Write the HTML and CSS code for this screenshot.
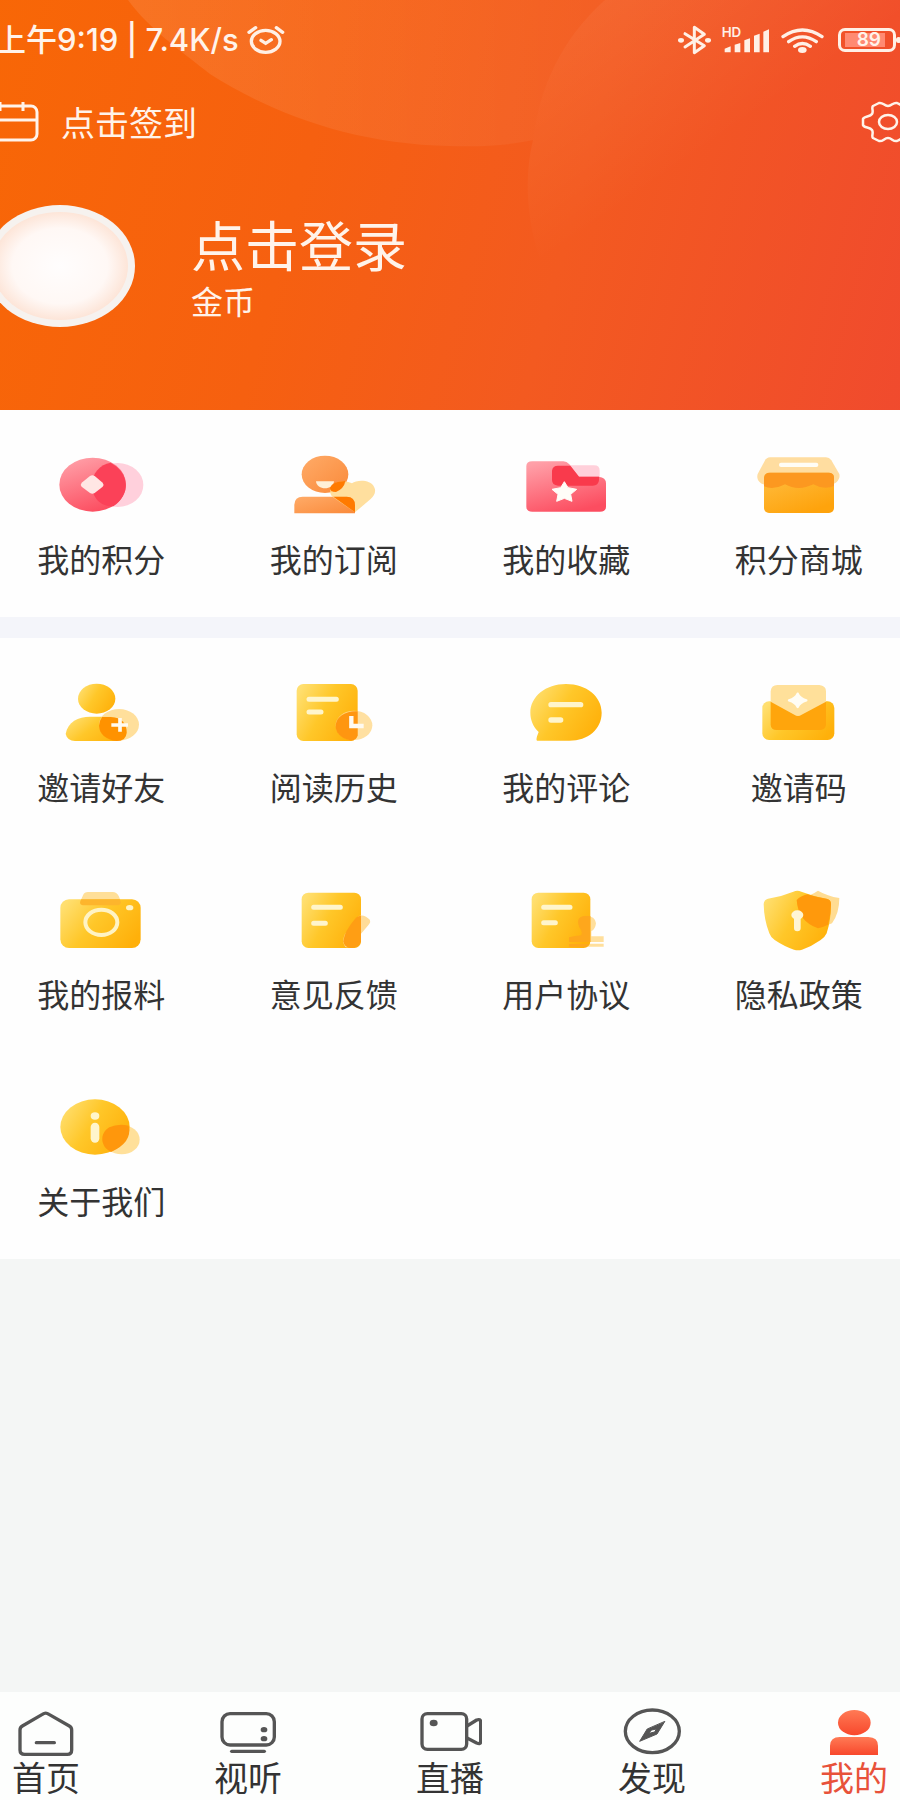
FILE: index.html
```html
<!DOCTYPE html>
<html lang="zh-CN">
<head>
  <meta charset="UTF-8">
  <meta name="viewport" content="width=device-width, initial-scale=1.0">
  <title>我的</title>
  <link rel="stylesheet" href="styles.css">
</head>
<body>
  <!-- shared gradients -->
  <svg class="defs" width="0" height="0" aria-hidden="true">
    <defs>
      <linearGradient id="yellow" x1="0" y1="0.2" x2="1" y2="0.7">
        <stop offset="0" stop-color="#ffdf70"/>
        <stop offset="0.45" stop-color="#ffc729"/>
        <stop offset="1" stop-color="#ffb00a"/>
      </linearGradient>
      <linearGradient id="red" x1="0.2" y1="0" x2="0.6" y2="1">
        <stop offset="0" stop-color="#ffa0a8"/>
        <stop offset="1" stop-color="#fc4d60"/>
      </linearGradient>
      <linearGradient id="peach" x1="0" y1="0" x2="1" y2="1">
        <stop offset="0" stop-color="#ffab68"/>
        <stop offset="1" stop-color="#fa8a3a"/>
      </linearGradient>
      <linearGradient id="shop" x1="0" y1="0" x2="0.6" y2="1">
        <stop offset="0" stop-color="#ffbe42"/>
        <stop offset="1" stop-color="#fea30c"/>
      </linearGradient>
      <linearGradient id="active" x1="0" y1="0" x2="0" y2="1">
        <stop offset="0" stop-color="#ff7a55"/>
        <stop offset="1" stop-color="#f8482c"/>
      </linearGradient>
    </defs>
  </svg>

  <header class="header">
    <svg class="header-bg" viewBox="0 0 900 410" preserveAspectRatio="none" aria-hidden="true">
      <defs>
        <linearGradient id="fadeOne" x1="0" y1="0" x2="1" y2="0">
          <stop offset="0" stop-color="#fff" stop-opacity="0.1"/>
          <stop offset="1" stop-color="#fff" stop-opacity="0.03"/>
        </linearGradient>
        <linearGradient id="fadeTwo" x1="0" y1="0" x2="0.5" y2="0.8">
          <stop offset="0" stop-color="#fff" stop-opacity="0.09"/>
          <stop offset="0.6" stop-color="#fff" stop-opacity="0"/>
        </linearGradient>
      </defs>
      <path fill="url(#fadeOne)" d="M128 0C150 30 180 50 210 74C270 112 350 144 450 146C485 147 510 145 533 140C539 90 560 40 605 0Z"/>
      <path fill="url(#fadeTwo)" d="M605 0C560 40 539 90 533 140C518 200 535 280 580 330C610 365 650 395 690 410H900V0Z"/>
    </svg>

    <div class="status">
      <span class="status-text">上午9:19 | 7.4K/s</span>
      <svg width="38" height="30" viewBox="744 72 114 90" fill="none" stroke="#fff0e6" stroke-width="10" stroke-linecap="round" aria-hidden="true">
        <ellipse cx="800" cy="121" rx="43" ry="33"/>
        <path d="M750 94L770 80M832 80L851 94M786 118L800 127L817 116"/>
      </svg>
      <div class="status-icons">
        <svg width="33" height="30" viewBox="684 71 99 90" aria-hidden="true">
          <path d="M705 97L763 133L733 154V78L763 99L705 137" fill="none" stroke="#fff0e6" stroke-width="9" stroke-linejoin="round" stroke-linecap="round"/>
          <ellipse cx="693" cy="117" rx="9" ry="7" fill="#fff0e6"/>
          <ellipse cx="774" cy="117" rx="9" ry="7" fill="#fff0e6"/>
        </svg>
        <svg class="signal" width="48" height="30" viewBox="814 71 144 90" fill="#fff0e6" aria-hidden="true">
          <text x="813" y="108">HD</text>
          <path d="M822 142L840 135V153H822ZM852 130L869 125V153H852ZM881 117L898 111V153H881ZM910 103L927 97V153H910ZM938 91L955 84V153H938Z"/>
        </svg>
        <svg class="wifi" width="43" height="30" viewBox="992 71 129 90" aria-hidden="true">
          <path d="M998 106Q1056 66 1115 106M1015 121Q1056 92 1098 121M1033 135Q1056 118 1080 135" fill="none" stroke="#fff0e6" stroke-width="10" stroke-linecap="round"/>
          <ellipse cx="1056" cy="146" rx="13" ry="9" fill="#fff0e6"/>
        </svg>
        <span class="battery"><span class="battery-level">89</span></span>
      </div>
    </div>

    <div class="toolbar">
      <button class="sign" type="button">
        <svg width="54" height="42" viewBox="0 0 54 42" fill="none" stroke="#fff3ea" stroke-width="3" aria-hidden="true">
          <rect x="4" y="5" width="48" height="34" rx="6"/>
          <path d="M4 19H52M15 1V10M38 1V10"/>
        </svg>
        <span>点击签到</span>
      </button>
      <button class="settings" type="button" aria-label="设置">
        <svg width="54" height="42" viewBox="0 0 54 42" fill="none" stroke="#fff3ea" stroke-width="2.5" stroke-linejoin="round" aria-hidden="true">
          <path d="M18 2C22 1 23 5 27 5S32 1 36 2L42 5C44 7 41 10 43 13C45 16 51 15 52 18V24C51 27 45 26 43 29C41 32 44 35 42 37L36 40C32 41 31 37 27 37S22 41 18 40L12 37C10 35 13 32 11 29C9 26 3 27 2 24V18C3 15 9 16 11 13C13 10 10 7 12 5Z"/>
          <ellipse cx="27" cy="21" rx="9" ry="7"/>
        </svg>
      </button>
    </div>

    <div class="profile">
      <svg class="avatar" width="150" height="122" viewBox="0 0 150 122" aria-hidden="true">
        <defs>
          <radialGradient id="face">
            <stop offset="0" stop-color="#fffdfd"/>
            <stop offset="0.7" stop-color="#fff8f5"/>
            <stop offset="1" stop-color="#fde5d8"/>
          </radialGradient>
        </defs>
        <ellipse cx="75" cy="61" rx="75" ry="61" fill="#f6f2ef"/>
        <ellipse cx="75" cy="61" rx="68" ry="54" fill="url(#face)"/>
      </svg>
      <div class="profile-info">
        <a class="login" href="#">点击登录</a>
        <span class="coins">金币</span>
      </div>
    </div>
  </header>

  <main>
    <nav class="menu">
      <a class="menu-item" href="#">
        <svg viewBox="153 60 300 204" aria-hidden="true">
          <ellipse cx="353" cy="165" rx="77" ry="66" fill="#ffd0dc"/>
          <ellipse cx="278" cy="164" rx="100" ry="81" fill="url(#red)"/>
          <path d="M332 98A100 81 0 0 1 340 229C300 230 276 202 276 164C276 130 300 103 332 98Z" fill="#fb4158"/>
          <path d="M270 138Q277 133 284 138L308 158Q313 164 308 170L284 189Q277 193 270 189L245 170Q240 164 245 158Z" fill="#ffe6e4"/>
        </svg>
        <span>我的积分</span>
      </a>
      <a class="menu-item" href="#">
        <svg viewBox="852 60 300 204" aria-hidden="true">
          <ellipse cx="975" cy="133" rx="70" ry="56" fill="url(#peach)"/>
          <path d="M948 154H1002C1000 182 950 182 948 154Z" fill="#fff0d8"/>
          <path d="M883 250V224Q884 200 908 200H1040Q1065 200 1065 226V250Z" fill="url(#peach)"/>
          <path d="M1065 247L998 201C978 180 1000 152 1032 154Q1046 155 1056 160C1070 148 1112 148 1122 170Q1132 188 1112 207Z" fill="#ffd98d" opacity="0.85"/>
          <path d="M990 174Q997 153 1036 153Q1032 176 1008 186Q990 186 990 174ZM1000 200H1040Q1065 200 1065 226V247Z" fill="#ff7a00"/>
        </svg>
        <span>我的订阅</span>
      </a>
      <a class="menu-item" href="#">
        <svg viewBox="198 60 300 204" aria-hidden="true">
          <path d="M354 106H432Q449 106 449 122V145H354Z" fill="#ffd0da"/>
          <path d="M229 108Q229 94 247 94H340Q350 94 358 103L387 140H446Q468 142 468 160V230Q468 245 450 245H247Q229 245 229 230Z" fill="url(#red)"/>
          <path d="M324 107H361L387 140H447V150Q446 167 428 167H324Q306 165 306 150V122Q308 107 324 107Z" fill="#f93a4c"/>
          <path d="M343 155L354 173L380 178L362 193L366 214L343 205L320 214L324 193L306 178L332 173Z" fill="#fffdf8" stroke="#fffdf8" stroke-width="3" stroke-linejoin="round"/>
        </svg>
        <span>我的收藏</span>
      </a>
      <a class="menu-item" href="#">
        <svg viewBox="897 60 300 204" aria-hidden="true">
          <path d="M960 82H1128Q1138 82 1144 91L1168 132C1172 148 1158 164 1140 164H948C930 164 918 148 923 132L944 93Q950 82 960 82Z" fill="#ffdda0"/>
          <rect x="942" y="128" width="210" height="121" rx="15" fill="url(#shop)"/>
          <path d="M942 143Q944 128 960 128H1135Q1152 128 1152 143V168Q1122 181 1090 163Q1045 185 1005 163Q970 181 942 169Z" fill="#fc9820"/>
          <rect x="987" y="98" width="118" height="13" rx="6" fill="#fffdf5"/>
        </svg>
        <span>积分商城</span>
      </a>
    </nav>

    <nav class="menu menu-more">
      <a class="menu-item" href="#">
        <svg viewBox="153 54 300 204" aria-hidden="true">
          <ellipse cx="290" cy="116" rx="56" ry="45" fill="url(#yellow)"/>
          <path d="M197 222C203 185 235 170 270 170H332C365 172 380 190 380 218Q378 243 350 243H225Q202 243 197 222Z" fill="url(#yellow)"/>
          <ellipse cx="357" cy="194" rx="60" ry="47" fill="#ffd98a" opacity="0.85"/>
          <path d="M306 171H332C365 172 380 190 380 218Q378 243 350 243C318 240 297 220 297 197Q297 184 306 171Z" fill="#ff9200"/>
          <path d="M360 174V215M334 195H384" stroke="#fffaf0" stroke-width="11"/>
        </svg>
        <span>邀请好友</span>
      </a>
      <a class="menu-item" href="#">
        <svg viewBox="852 54 300 204" aria-hidden="true">
          <rect x="890" y="72" width="183" height="171" rx="20" fill="url(#yellow)"/>
          <ellipse cx="1062" cy="196" rx="55" ry="44" fill="#ffdb91" opacity="0.85"/>
          <path d="M1073 154V226Q1070 243 1050 241C1020 234 1005 215 1007 194C1010 170 1038 152 1073 154Z" fill="#ff9610"/>
          <path d="M927 118H1009M927 156H963" stroke="#fff5cc" stroke-width="15" stroke-linecap="round"/>
          <path d="M1054 168V198H1091" fill="none" stroke="#fffaf0" stroke-width="13"/>
        </svg>
        <span>阅读历史</span>
      </a>
      <a class="menu-item" href="#">
        <svg viewBox="198 54 300 204" aria-hidden="true">
          <path d="M348 72C410 72 455 110 455 158C455 207 414 242 358 242H261Q256 240 266 216C250 200 241 181 241 158C241 110 287 72 348 72Z" fill="url(#yellow)"/>
          <path d="M303 134H392M303 180H332" stroke="#fff5cc" stroke-width="16" stroke-linecap="round"/>
        </svg>
        <span>我的评论</span>
      </a>
      <a class="menu-item" href="#">
        <svg viewBox="897 54 300 204" aria-hidden="true">
          <rect x="937" y="124" width="216" height="116" rx="20" fill="url(#yellow)"/>
          <path d="M962 125H1128V194Q1126 210 1108 210H980Q963 210 962 194Z" fill="#ffa50c"/>
          <path d="M962 94Q964 75 982 75H1108Q1128 77 1128 94V125L1055 164Q1044 172 1033 164L962 125Z" fill="#ffe09a"/>
          <path d="M1043 101Q1049 115 1069 121Q1049 127 1043 141Q1037 127 1017 121Q1037 115 1043 101Z" fill="#fffdf5" stroke="#fffdf5" stroke-width="7" stroke-linejoin="round"/>
        </svg>
        <span>邀请码</span>
      </a>

      <a class="menu-item" href="#">
        <svg viewBox="153 45 300 204" aria-hidden="true">
          <path d="M264 66H338Q350 66 356 78L368 106H236L249 76Q253 66 264 66Z" fill="#ffdf98"/>
          <rect x="181" y="88" width="241" height="146" rx="26" fill="url(#yellow)"/>
          <path d="M244 88H359Q368 104 354 106H248Q234 102 244 88Z" fill="#fdb52c"/>
          <ellipse cx="304" cy="157" rx="48" ry="38" fill="none" stroke="#fff3c4" stroke-width="12"/>
          <ellipse cx="389" cy="113" rx="11" ry="8" fill="#fff3c4"/>
        </svg>
        <span>我的报料</span>
      </a>
      <a class="menu-item" href="#">
        <svg viewBox="852 45 300 204" aria-hidden="true">
          <rect x="905" y="68" width="178" height="166" rx="20" fill="url(#yellow)"/>
          <path d="M1074 140Q1084 133 1098 140L1108 148Q1114 156 1106 164L1052 228Q1046 234 1036 231Q1025 216 1034 194Z" fill="#ffdc98"/>
          <path d="M1083 137V214Q1078 234 1054 234Q1032 234 1030 214Q1032 184 1068 143Q1075 137 1083 137Z" fill="#ff9e14"/>
          <path d="M941 112H1021M941 160H976" stroke="#fff5cc" stroke-width="15" stroke-linecap="round"/>
        </svg>
        <span>意见反馈</span>
      </a>
      <a class="menu-item" href="#">
        <svg viewBox="198 45 300 204" aria-hidden="true">
          <path d="M400 138Q436 135 438 160Q436 178 424 184V199H461V216H400ZM400 221H461V230H400Z" fill="#ffdf9c"/>
          <rect x="245" y="68" width="176" height="166" rx="20" fill="url(#yellow)"/>
          <path d="M421 138V216H357V202Q374 198 394 196Q398 186 388 172Q376 142 402 138ZM357 222H418L410 230H357Z" fill="#fea71c"/>
          <path d="M281 112H360M281 158H316" stroke="#fff5cc" stroke-width="15" stroke-linecap="round"/>
        </svg>
        <span>用户协议</span>
      </a>
      <a class="menu-item" href="#">
        <svg viewBox="897 45 300 204" aria-hidden="true">
          <path d="M1104 62Q1132 78 1168 84Q1168 130 1146 160Q1126 170 1104 174Q1044 156 1040 88Q1082 78 1104 62Z" fill="#ffdc92"/>
          <path d="M1030 65Q1042 60 1054 65Q1092 80 1130 86Q1143 89 1143 102Q1143 150 1130 190Q1126 200 1112 210Q1084 230 1056 239Q1044 243 1032 239Q1004 230 974 210Q962 202 958 190Q942 150 941 102Q942 89 954 86Q994 80 1030 65Z" fill="url(#yellow)"/>
          <path d="M1072 73Q1104 83 1132 87Q1143 90 1143 102Q1143 134 1134 164Q1118 172 1104 175Q1044 154 1040 90Q1052 78 1072 73Z" fill="#ff990c"/>
          <ellipse cx="1042" cy="135" rx="18" ry="14" fill="#fff5d4"/>
          <path d="M1042 138V174" stroke="#fff5d4" stroke-width="20" stroke-linecap="round"/>
        </svg>
        <span>隐私政策</span>
      </a>

      <a class="menu-item" href="#">
        <svg viewBox="153 36 300 204" aria-hidden="true">
          <ellipse cx="365" cy="179" rx="54" ry="44" fill="#ffe09a"/>
          <ellipse cx="285" cy="141" rx="104" ry="83" fill="url(#yellow)"/>
          <path d="M386 137Q398 186 333 216C300 200 298 160 328 142Q354 130 386 137Z" fill="#ff970c"/>
          <ellipse cx="285" cy="108" rx="13" ry="11" fill="#fff5cc"/>
          <path d="M285 141V175" stroke="#fff5cc" stroke-width="26" stroke-linecap="round"/>
        </svg>
        <span>关于我们</span>
      </a>
    </nav>
  </main>

  <nav class="tabbar">
    <a class="tab" href="#">
      <svg viewBox="42 81 192 156" aria-hidden="true">
        <path d="M127 103Q137 96 147 103L208 138Q215 142 215 150V210Q215 223 202 223H74Q60 223 60 210V150Q60 142 67 138ZM109 188H163"/>
      </svg>
      <span>首页</span>
    </a>
    <a class="tab" href="#">
      <svg viewBox="649 81 192 156" aria-hidden="true">
        <rect x="667" y="101" width="157" height="94" rx="24"/>
        <path d="M696 214H794"/>
        <ellipse class="dot" cx="793" cy="149" rx="10" ry="8"/>
        <ellipse class="dot" cx="793" cy="176" rx="10" ry="8"/>
      </svg>
      <span>视听</span>
    </a>
    <a class="tab" href="#">
      <svg viewBox="1254 81 192 156" aria-hidden="true">
        <rect x="1266" y="101" width="134" height="107" rx="16"/>
        <path d="M1401 138L1430 120Q1442 116 1442 126V185Q1442 194 1430 189L1401 174"/>
        <ellipse class="dot" cx="1301" cy="129" rx="12" ry="10"/>
      </svg>
      <span>直播</span>
    </a>
    <a class="tab" href="#">
      <svg viewBox="511 81 192 156" aria-hidden="true">
        <ellipse cx="608" cy="154" rx="81" ry="64"/>
        <path class="needle" d="M645 125L622 162L570 184L592 148ZM598 160L615 156L620 147L606 150Z"/>
      </svg>
      <span>发现</span>
    </a>
    <a class="tab tab-active" href="#">
      <svg viewBox="1119 81 192 156" aria-hidden="true">
        <ellipse cx="1216" cy="128" rx="49" ry="38" fill="url(#active)"/>
        <path d="M1143 225V197Q1144 171 1172 171H1258Q1287 172 1287 197V225Z" fill="url(#active)"/>
      </svg>
      <span>我的</span>
    </a>
  </nav>
</body>
</html>
```

FILE: styles.css
```css
* {
  box-sizing: border-box;
}
body {
  margin: 0;
  min-height: 100vh;
  display: flex;
  flex-direction: column;
  overflow-x: hidden;
  background: #f4f6f5;
  color: #333;
  font-family: "Noto Sans CJK SC", sans-serif;
}
a {
  color: inherit;
  text-decoration: none;
}
button {
  padding: 0;
  border: none;
  background: none;
  color: inherit;
  font: inherit;
  cursor: pointer;
}
svg {
  display: block;
  flex-shrink: 0;
}
.defs {
  position: absolute;
}

/* header */
.header {
  position: relative;
  height: 410px;
  margin: 0 -15px;
  overflow: hidden;
  background: linear-gradient(105deg, #f86706 0%, #f66010 35%, #f35a20 62%, #f04a2e 100%);
  color: #fff3ea;
}
.header-bg {
  position: absolute;
  top: 0;
  left: 15px;
  width: calc(100% - 30px);
  height: 100%;
}
.status,
.toolbar,
.profile {
  position: relative;
  display: flex;
  align-items: center;
}
.status {
  height: 80px;
  padding: 0 15px 0 10px;
  gap: 8px;
}
.status-text {
  font-family: Inter, "Noto Sans CJK SC", sans-serif;
  font-size: 31px;
  font-weight: 500;
  line-height: 40px;
  white-space: nowrap;
}
.status-icons {
  display: flex;
  align-items: center;
  gap: 11px;
  margin-left: auto;
}
.signal text {
  font-family: Inter, sans-serif;
  font-size: 40px;
  font-weight: 600;
}
.wifi {
  margin-right: 3px;
}
.battery {
  position: relative;
  width: 58px;
  height: 24px;
  margin-right: 4px;
  padding: 2px 8px 2px 4px;
  border: 3px solid #fff0e6;
  border-radius: 7px;
}
.battery::after {
  content: "";
  position: absolute;
  top: 6px;
  right: -8px;
  width: 5px;
  height: 6px;
  border-radius: 3px;
  background: #fff0e6;
}
.battery-level {
  display: block;
  height: 14px;
  padding-right: 4px;
  background: #ff8a72;
  font-family: Inter, sans-serif;
  font-size: 19px;
  font-weight: 600;
  line-height: 14px;
  text-align: right;
}
.toolbar {
  height: 84px;
  justify-content: space-between;
}
.sign {
  display: flex;
  align-items: center;
  gap: 22px;
  font-size: 34px;
  line-height: 40px;
}
.profile {
  padding-top: 41px;
  gap: 56px;
}
.profile-info {
  display: flex;
  flex-direction: column;
  gap: 4px;
}
.login {
  font-size: 54px;
  line-height: 64px;
}
.coins {
  font-size: 32px;
  line-height: 40px;
}

/* menu grids */
.menu {
  display: grid;
  grid-template-columns: repeat(4, 1fr);
  margin: 0 -15px;
  background: #fefefe;
  border-bottom: 21px solid #f4f5fa;
}
.menu-more {
  border-bottom: none;
}
.menu-item {
  display: flex;
  flex-direction: column;
  align-items: center;
  gap: 20px;
  padding: 40px 0 39px;
  font-size: 32px;
  line-height: 40px;
}
.menu-item svg {
  width: 100px;
  height: 68px;
}

/* bottom tabs */
.tabbar {
  display: flex;
  justify-content: space-between;
  margin-top: auto;
  padding: 15px 12px 5px;
  background: #fdfefd;
}
.tab {
  display: flex;
  flex-direction: column;
  align-items: center;
  font-size: 34px;
  line-height: 36px;
}
.tab svg {
  width: 64px;
  height: 52px;
  fill: none;
  stroke: #555;
  stroke-width: 10px;
  stroke-linecap: round;
  stroke-linejoin: round;
}
.tab .dot {
  fill: #555;
  stroke: none;
}
.tab .needle {
  fill: #555;
  fill-rule: evenodd;
  stroke-width: 3px;
}
.tab-active {
  color: #e8523a;
}
.tab-active svg {
  stroke: none;
}
```
